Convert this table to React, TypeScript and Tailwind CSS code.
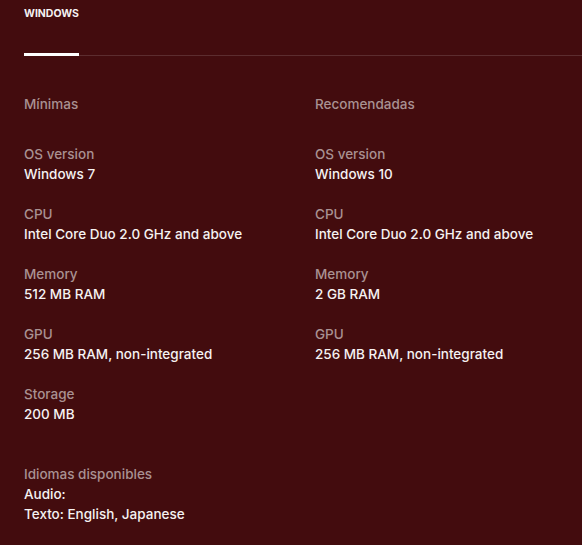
const minimum = [
  { label: "OS version", value: "Windows 7" },
  { label: "CPU", value: "Intel Core Duo 2.0 GHz and above" },
  { label: "Memory", value: "512 MB RAM" },
  { label: "GPU", value: "256 MB RAM, non-integrated" },
  { label: "Storage", value: "200 MB" },
];

const recommended = [
  { label: "OS version", value: "Windows 10" },
  { label: "CPU", value: "Intel Core Duo 2.0 GHz and above" },
  { label: "Memory", value: "2 GB RAM" },
  { label: "GPU", value: "256 MB RAM, non-integrated" },
];

function SpecColumn({
  title,
  items,
}: {
  title: string;
  items: { label: string; value: string }[];
}) {
  return (
    <div className="flex flex-col gap-5">
      <div className="mb-[10px] text-[13.5px] font-medium leading-5 text-[#a99192]">
        {title}
      </div>
      {items.map((item) => (
        <div key={item.label} className="flex flex-col">
          <div className="text-[13.5px] font-medium leading-5 text-[#a99192]">
            {item.label}
          </div>
          <div className="text-[13.5px] font-medium leading-5 text-[#f5f2f2]">
            {item.value}
          </div>
        </div>
      ))}
    </div>
  );
}

export default function App() {
  return (
    <main
      className="min-h-[545px] w-[582px] overflow-hidden bg-[#430c0e] pl-6"
      style={{ fontFamily: "Inter, 'Noto Sans', sans-serif" }}
    >
      <div className="flex border-b border-[#5c2d2f]">
        <div className="relative flex h-[55px] w-[55px] items-start pt-[6px]">
          <span className="text-[10.5px] font-bold uppercase leading-4 text-[#f5f2f2]">
            Windows
          </span>
          <span className="absolute -bottom-px left-0 h-[3px] w-[55px] bg-white" />
        </div>
      </div>

      <div className="mt-[38px] grid grid-cols-[291px_1fr]">
        <SpecColumn title="Mínimas" items={minimum} />
        <SpecColumn title="Recomendadas" items={recommended} />
      </div>

      <div className="mt-[40px] flex flex-col pb-5">
        <div className="text-[13.5px] font-medium leading-5 text-[#a99192]">
          Idiomas disponibles
        </div>
        <div className="text-[13.5px] font-medium leading-5 text-[#f5f2f2]">
          Audio:
        </div>
        <div className="text-[13.5px] font-medium leading-5 text-[#f5f2f2]">
          Texto: English, Japanese
        </div>
      </div>
    </main>
  );
}
